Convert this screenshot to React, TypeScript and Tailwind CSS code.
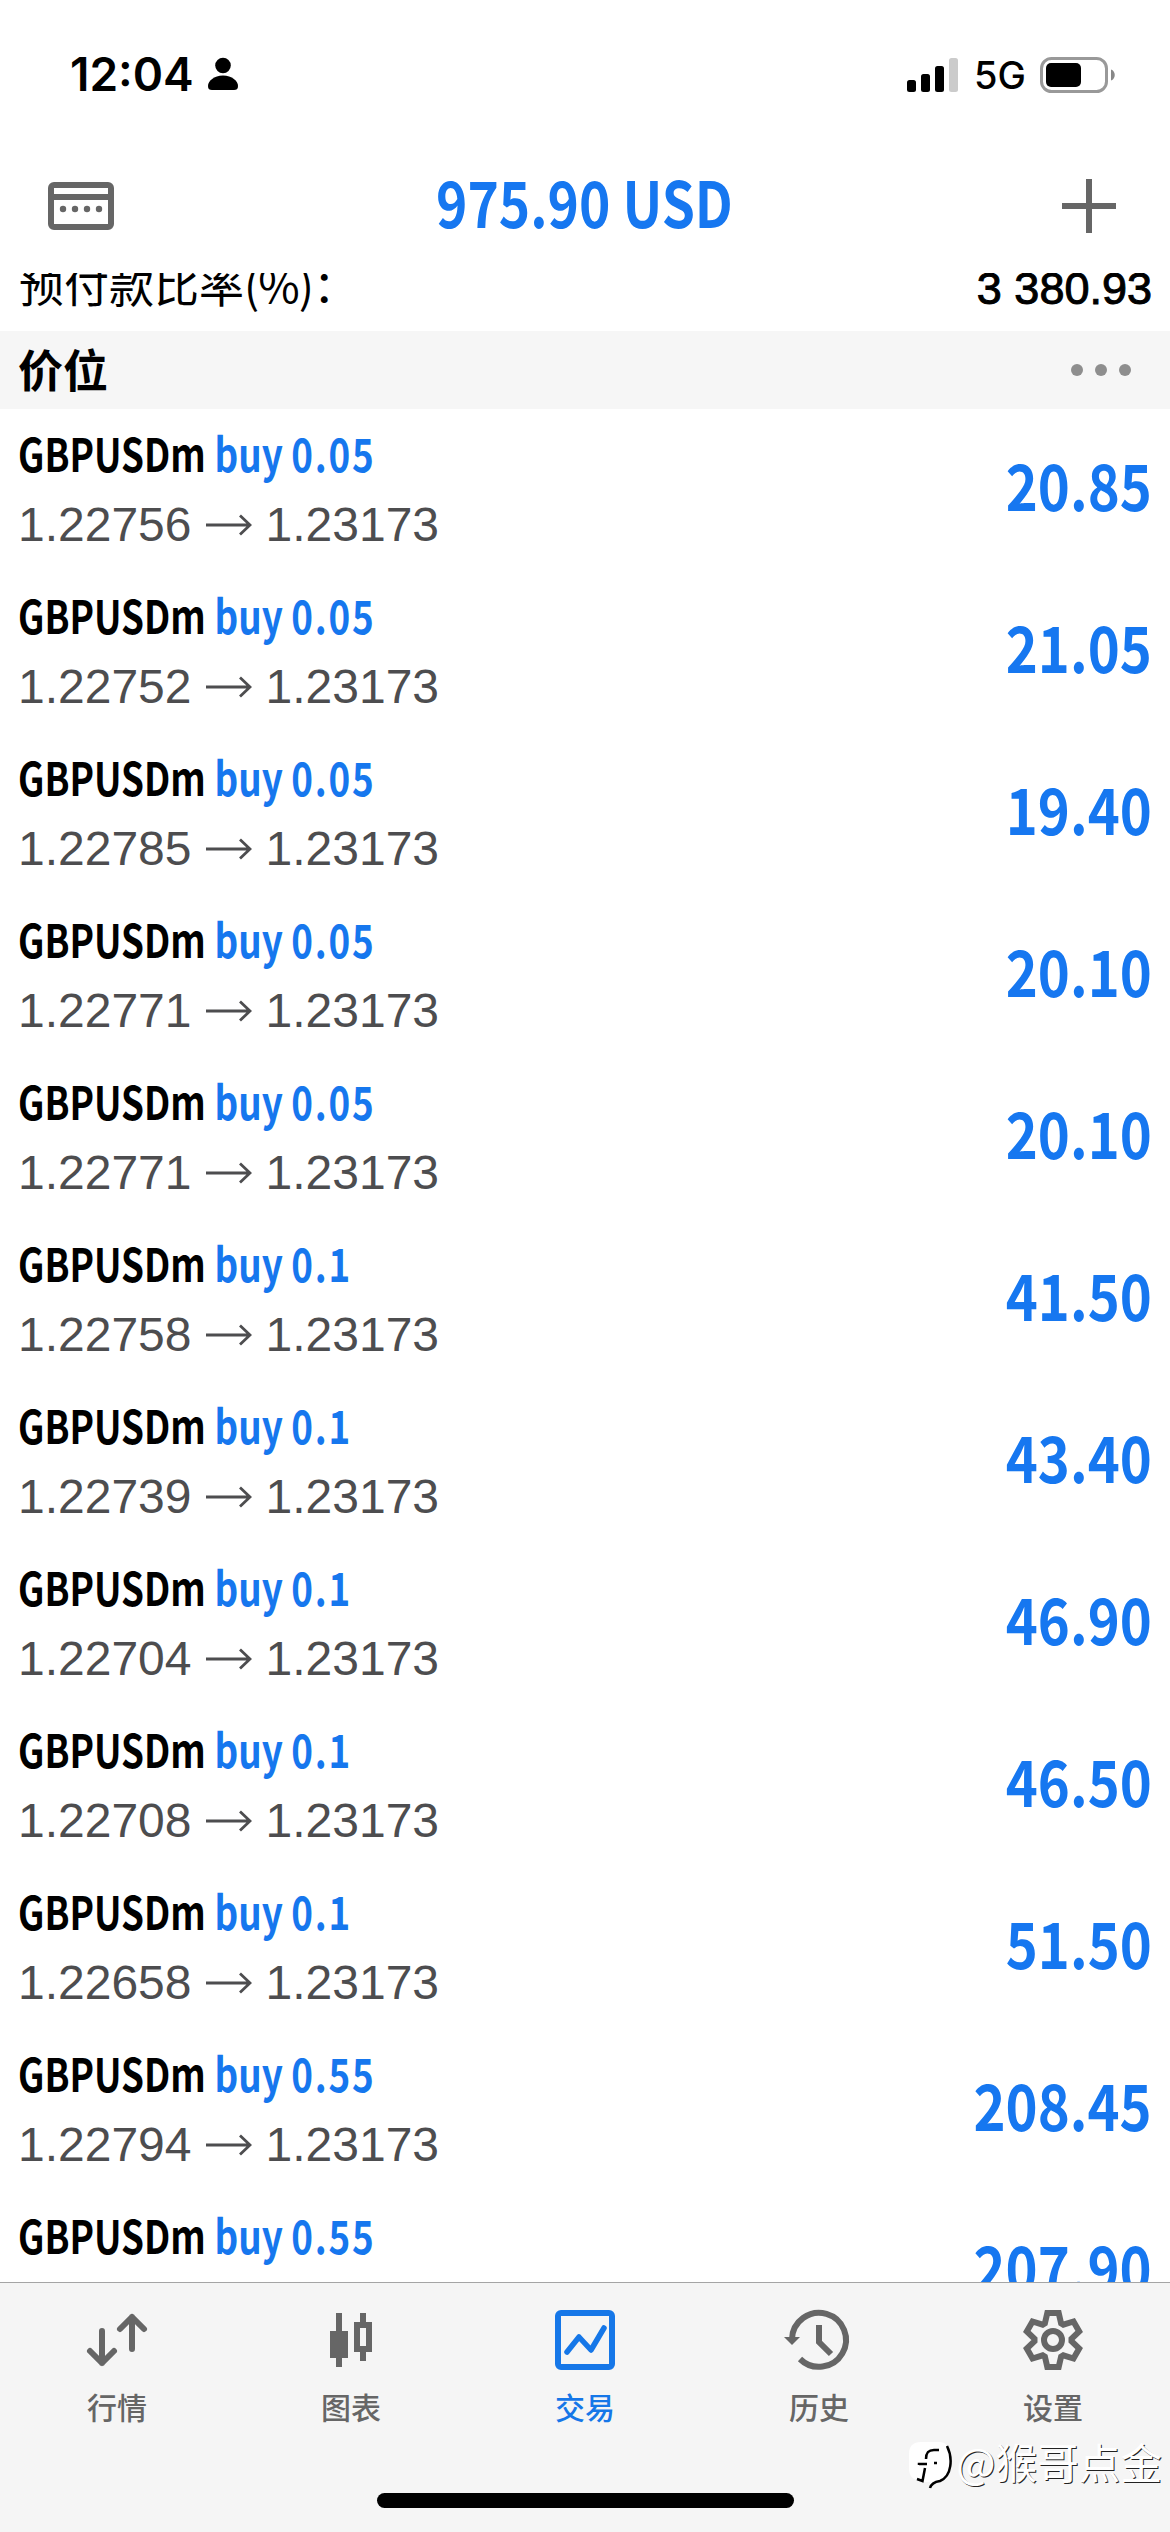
import type { ReactNode } from "react";

type Position = {
  volume: string;
  open: string;
  current: string;
  profit: string;
};

const positions: Position[] = [
  { volume: "0.05", open: "1.22756", current: "1.23173", profit: "20.85" },
  { volume: "0.05", open: "1.22752", current: "1.23173", profit: "21.05" },
  { volume: "0.05", open: "1.22785", current: "1.23173", profit: "19.40" },
  { volume: "0.05", open: "1.22771", current: "1.23173", profit: "20.10" },
  { volume: "0.05", open: "1.22771", current: "1.23173", profit: "20.10" },
  { volume: "0.1", open: "1.22758", current: "1.23173", profit: "41.50" },
  { volume: "0.1", open: "1.22739", current: "1.23173", profit: "43.40" },
  { volume: "0.1", open: "1.22704", current: "1.23173", profit: "46.90" },
  { volume: "0.1", open: "1.22708", current: "1.23173", profit: "46.50" },
  { volume: "0.1", open: "1.22658", current: "1.23173", profit: "51.50" },
  { volume: "0.55", open: "1.22794", current: "1.23173", profit: "208.45" },
];

// the row that is half hidden behind the tab bar
const lastPosition = { volume: "0.55", profit: "207.90" };

function StatusBar() {
  return (
    <div className="flex h-[150px] shrink-0 items-start justify-between pl-[70px] pr-[54px] pt-[52px] text-black">
      <div className="flex items-center gap-[13px]">
        <span className="font-['Inter',sans-serif] text-[46px] font-semibold leading-[44px]">12:04</span>
        <svg width="32" height="34" viewBox="0 0 32 34" fill="currentColor">
          <circle cx="16" cy="8.5" r="7.8" />
          <path d="M1 29C1 24 7 18.5 16 18.5S31 24 31 29C31 32 29.500 33 27 33H5C2.500 33 1 32 1 29Z" />
        </svg>
      </div>
      <div className="flex items-center">
        <svg width="52" height="36" viewBox="0 0 52 36">
          <rect x="0" y="23" width="9" height="12" rx="2.500" />
          <rect x="14" y="17" width="9" height="18" rx="2.500" />
          <rect x="28" y="9" width="9" height="26" rx="2.500" />
          <rect x="42" y="1" width="9" height="34" rx="2.500" fill="#cbcbcb" />
        </svg>
        <span className="ml-[15px] w-[66px] pt-px font-['Inter',sans-serif] text-[38px] font-medium leading-[44px]">5G</span>
        <svg width="76" height="36" viewBox="0 0 76 36">
          <rect x="1.500" y="1.500" width="65" height="33" rx="10" fill="none" stroke="#999" strokeWidth="3" />
          <rect x="6" y="6" width="35" height="24" rx="5" />
          <path d="M71 12.500C76 14 76 22 71 23.500Z" fill="#888" />
        </svg>
      </div>
    </div>
  );
}

function PositionTitle({ volume }: { volume: string }) {
  return (
    <div className="flex h-[56px] origin-left scale-x-[0.8] items-center gap-[11px] whitespace-nowrap font-['Noto_Sans_CJK_SC',sans-serif] text-[46px] font-bold">
      <span className="text-black">GBPUSDm</span>
      <span className="text-[#1677ee]">
        buy <span className="tracking-[2.2px]">{volume}</span>
      </span>
    </div>
  );
}

function Profit({ value }: { value: string }) {
  return (
    <div className="origin-right scale-x-[0.85] font-['Noto_Sans_CJK_SC',sans-serif] text-[64px] font-bold leading-[64px] text-[#1677f0]">
      {value}
    </div>
  );
}

function PositionRow({ position }: { position: Position }) {
  return (
    <li className="flex h-[162px] shrink-0 justify-between pl-[18px] pr-[18px]">
      <div className="flex flex-col pt-[15px]">
        <PositionTitle volume={position.volume} />
        <div className="mt-[13px] flex h-[60px] items-center pt-[4px] font-['Liberation_Sans',sans-serif] text-[48px] text-[#4d4d4f]">
          <span>{position.open}</span>
          <svg width="46" height="24" viewBox="0 0 46 24" fill="none" stroke="currentColor" strokeWidth="2.800" className="mx-[14px]">
            <path d="M0 12H44M34 2.500L44 12L34 21.500" />
          </svg>
          <span>{position.current}</span>
        </div>
      </div>
      <div className="pt-[42px]">
        <Profit value={position.profit} />
      </div>
    </li>
  );
}

function Tab({ label, active, children }: { label: string; active?: boolean; children: ReactNode }) {
  return (
    <button className={`flex flex-1 flex-col items-center pt-[24px] ${active ? "text-[#1677e8]" : "text-[#666]"}`}>
      <svg width="66" height="66" viewBox="0 0 66 66" fill="none" stroke="currentColor" strokeWidth="6" className="overflow-visible">
        {children}
      </svg>
      <span className="mt-[11px] font-['Noto_Sans_CJK_SC',sans-serif] text-[30px] font-medium leading-[44px]">{label}</span>
    </button>
  );
}

function Watermark() {
  return (
    <div className="absolute bottom-[38px] right-[8px] flex items-center gap-[3px]">
      <svg width="44" height="48" viewBox="0 0 44 48">
        <path d="M12 1H30C37 1 40 5 40 13V26C40 36 34 40 28 41L21 46V41H14L8 39C3 38 0 34 0 27V13C0 5 4 1 12 1Z" fill="#fff" />
        <path d="M38 5C44 17 43 35 31 40C25 41 22 43 21 47" fill="none" stroke="#000" strokeWidth="2.500" />
        <path d="M30 9H25C19 9 17 12 17 18M10 24V23H18M25 22H28M16 27L13.500 40L8 38" fill="none" stroke="#000" strokeWidth="2.500" />
      </svg>
      <span className="pb-[8px] font-['Noto_Sans_CJK_SC',sans-serif] text-[41.600px] leading-[50px] text-white [text-shadow:1px_1px_0_#222]">@猴哥点金</span>
    </div>
  );
}

export default function App() {
  return (
    <div className="flex h-[2532px] w-[1170px] flex-col overflow-hidden bg-white">
      <StatusBar />

      <header className="flex h-[123px] shrink-0 items-center justify-between pl-[48px] pr-[54px] pb-[11px]">
        <svg width="66" height="48" viewBox="0 0 66 48" fill="none" stroke="#666" strokeWidth="6">
          <rect x="3" y="3" width="60" height="42" rx="3" />
          <path d="M3 15H63" />
          <g fill="#666" stroke="none">
            <circle cx="15" cy="27" r="3.200" />
            <circle cx="27" cy="27" r="3.200" />
            <circle cx="39" cy="27" r="3.200" />
            <circle cx="51" cy="27" r="3.200" />
          </g>
        </svg>
        <h1 className="mr-[7px] scale-x-[0.832] whitespace-nowrap pb-[12px] font-['Noto_Sans_CJK_SC',sans-serif] text-[64px] font-bold leading-none text-[#1677f0]">
          975.90 USD
        </h1>
        <svg width="54" height="54" viewBox="0 0 54 54" stroke="#666" strokeWidth="6">
          <path d="M27 0V54M0 27H54" />
        </svg>
      </header>

      <main className="flex min-h-0 flex-1 flex-col overflow-hidden">
        <div className="flex h-[58px] shrink-0 items-end justify-between overflow-hidden pl-[19px] pr-[18px] text-black">
          <span className="flex pb-[17px] font-['Noto_Sans_CJK_SC',sans-serif] text-[45px] leading-[60px]">
            预付款比率<span className="tracking-[-1px]">(%)：</span>
          </span>
          <span className="pb-[15px] font-['Liberation_Sans',sans-serif] text-[45px] leading-[54px] [-webkit-text-stroke:1px_black]">3 380.93</span>
        </div>
        <div className="flex h-[78px] shrink-0 items-center justify-between bg-[#f6f6f6] pl-[18px] pr-[39px]">
          <h2 className="pb-[3px] font-['Noto_Sans_CJK_SC',sans-serif] text-[45px] font-bold leading-[60px] text-black">价位</h2>
          <div className="flex gap-3">
            <span className="size-3 rounded-full bg-[#8e8e8e]" />
            <span className="size-3 rounded-full bg-[#8e8e8e]" />
            <span className="size-3 rounded-full bg-[#8e8e8e]" />
          </div>
        </div>
        <ul className="flex min-h-0 flex-1 flex-col overflow-hidden">
          {positions.map((position, i) => (
            <PositionRow key={i} position={position} />
          ))}
          <li className="flex shrink-0 justify-between px-[18px]">
            <div className="pt-[15px]">
              <PositionTitle volume={lastPosition.volume} />
            </div>
            <div className="pt-[42px]">
              <Profit value={lastPosition.profit} />
            </div>
          </li>
        </ul>
      </main>

      <nav className="relative flex h-[250px] shrink-0 flex-col items-center justify-between border-t border-[#a5a5a5] bg-[#f5f5f5] pb-[24px]">
        <div className="flex w-full">
          <Tab label="行情">
            <path d="M18 24V56M6 44L18 56L30 44M48 42V10M36 22L48 10L60 22" strokeLinecap="round" strokeLinejoin="round" />
          </Tab>
          <Tab label="图表">
            <g fill="currentColor" stroke="none">
              <path d="M18 6H24V24H30V51H24V60H18V51H12V24H18Z" />
              <path fillRule="evenodd" d="M42 6H48V15H54V45H48V54H42V45H36V15H42ZM42 21V39H48V21Z" />
            </g>
          </Tab>
          <Tab label="交易" active>
            <rect x="6" y="6" width="54" height="54" rx="3" />
            <path d="M15 45L27 30L39 43L52 21" strokeWidth="5.500" strokeLinecap="round" strokeLinejoin="round" />
          </Tab>
          <Tab label="历史">
            <path d="M6 32A27 27 0 1 1 14 52M33 18V35L45 47" />
            <path d="M-2 30H14L6 38Z" fill="currentColor" stroke="none" />
          </Tab>
          <Tab label="设置">
            <path d="M27.300 6H38.700L41.100 16.400L43.300 17.700L53.500 14.500L59.200 24.500L51.500 31.700V34.300L59.200 41.500L53.500 51.500L43.300 48.300L41.100 49.600L38.700 60H27.300L24.900 49.600L22.700 48.300L12.500 51.500L6.800 41.500L14.500 34.300V31.700L6.800 24.500L12.500 14.500L22.700 17.700L24.900 16.400Z" />
            <circle cx="33" cy="33" r="9" />
          </Tab>
        </div>
        <div className="h-[15px] w-[417px] rounded-full bg-black" />
        <Watermark />
      </nav>
    </div>
  );
}
